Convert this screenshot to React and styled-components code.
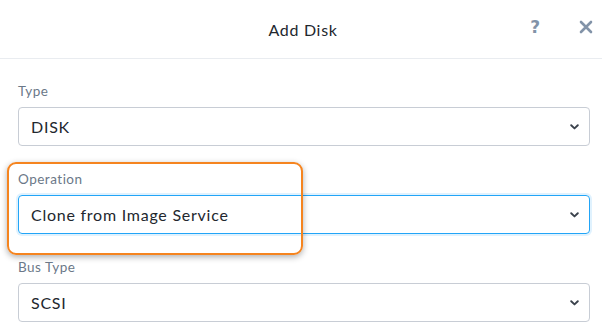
import React from "react";
import styled, { createGlobalStyle } from "styled-components";

const Global = createGlobalStyle`
  html, body { margin: 0; padding: 0; background: #ffffff; }
  body { font-family: "Lato", "Open Sans", "Liberation Sans", sans-serif; }
  * { box-sizing: border-box; }
`;

const Dialog = styled.div`
  width: 602px;
  height: 331px;
  background: #fff;
  overflow: hidden;
`;

const Header = styled.div`
  height: 59px;
  border-bottom: 1px solid #e9ecf0;
  display: flex;
  align-items: center;
  justify-content: center;
  position: relative;
`;

const Title = styled.div`
  font-size: 16px;
  color: #22272e;
  letter-spacing: 0.7px;
  margin-left: 4px;
`;

const HeaderActions = styled.div`
  position: absolute;
  right: 9px;
  top: 0;
  height: 54px;
  display: flex;
  align-items: center;
  gap: 39px;
`;

const Help = styled.span`
  font-family: "DejaVu Sans", "Liberation Sans", sans-serif;
  font-size: 17px;
  font-weight: 700;
  color: #8293a8;
  line-height: 1;
`;

const Form = styled.div`
  padding: 24px 12px 0 18px;
  display: flex;
  flex-direction: column;
  gap: 25px;
`;

const Field = styled.div`
  position: relative;
  display: flex;
  flex-direction: column;
  gap: 8px;
`;

const Label = styled.div`
  font-size: 13.5px;
  line-height: 16px;
  letter-spacing: 0.5px;
  color: #6b7888;
`;

const SelectBox = styled.div`
  height: 39px;
  border: 1px solid ${(p) => (p.$focused ? "#22a5f7" : "#c8cdd5")};
  border-radius: 4px;
  box-shadow: ${(p) => (p.$focused ? "0 0 0 2px rgba(34,165,247,0.14)" : "none")};
  display: flex;
  align-items: center;
  justify-content: space-between;
  padding: 0 10px 0 12px;
  font-size: 16px;
  letter-spacing: 0.75px;
  color: #22272e;
`;

const Highlight = styled.div`
  position: absolute;
  left: -11px;
  top: -9px;
  width: 296px;
  height: 93px;
  border: 2px solid #f5841f;
  border-radius: 9px;
  box-shadow: 0 2px 6px rgba(0, 0, 0, 0.32);
  pointer-events: none;
`;

const Chevron = () => (
  <svg width="9" height="6" viewBox="0 0 9 6">
    <path d="M1.2 1.2 L4.5 4.4 L7.8 1.2" fill="none" stroke="#3b424c" strokeWidth="1.9" strokeLinecap="round" strokeLinejoin="round" />
  </svg>
);

const Close = () => (
  <svg width="14" height="14" viewBox="0 0 14 14">
    <path d="M2 2 L12 12 M12 2 L2 12" stroke="#8293a8" strokeWidth="2.6" strokeLinecap="round" />
  </svg>
);

const Select = ({ label, value, focused, highlighted }) => (
  <Field>
    {highlighted && <Highlight />}
    <Label>{label}</Label>
    <SelectBox $focused={focused}>
      <span>{value}</span>
      <Chevron />
    </SelectBox>
  </Field>
);

export default function App() {
  return (
    <Dialog>
      <Global />
      <Header>
        <Title>Add Disk</Title>
        <HeaderActions>
          <Help>?</Help>
          <Close />
        </HeaderActions>
      </Header>
      <Form>
        <Select label="Type" value="DISK" />
        <Select label="Operation" value="Clone from Image Service" focused highlighted />
        <Select label="Bus Type" value="SCSI" />
      </Form>
    </Dialog>
  );
}
